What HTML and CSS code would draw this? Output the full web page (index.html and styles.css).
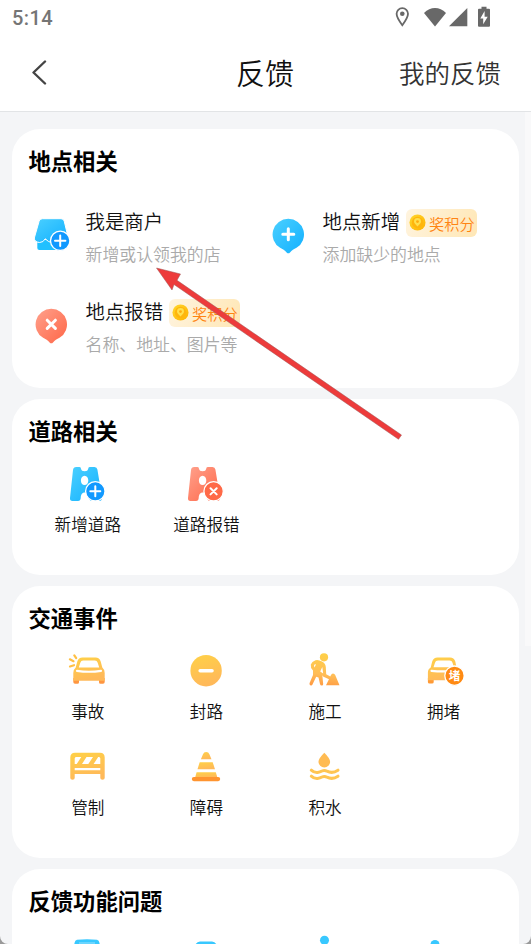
FILE: index.html
```html
<!DOCTYPE html>
<html lang="zh-CN">
<head>
<meta charset="utf-8">
<title>反馈</title>
<link rel="stylesheet" href="styles.css">
</head>
<body>
<svg class="defs" aria-hidden="true">
  <defs>
    <linearGradient id="blue" x1="0" y1="0" x2="1" y2="1"><stop offset="0" stop-color="#4bd0ff"/><stop offset="1" stop-color="#12b0ff"/></linearGradient>
    <linearGradient id="red" x1="0" y1="0" x2="1" y2="1"><stop offset="0" stop-color="#ffa18c"/><stop offset="1" stop-color="#ff6647"/></linearGradient>
    <linearGradient id="amber" x1="0" y1="0" x2="0.3" y2="1"><stop offset="0" stop-color="#ffd147"/><stop offset="1" stop-color="#ffb959"/></linearGradient>
    <linearGradient id="worker" gradientUnits="userSpaceOnUse" x1="20" y1="3" x2="16" y2="36"><stop offset="0" stop-color="#ffd147"/><stop offset=".65" stop-color="#ffbd57"/><stop offset="1" stop-color="#ff9a42"/></linearGradient>
    <linearGradient id="coin" x1="0" y1="0" x2="1" y2="1"><stop offset="0" stop-color="#ffd82e"/><stop offset="1" stop-color="#ffb000"/></linearGradient>
    <symbol id="coin-icon" viewBox="0 0 18 18"><circle cx="9" cy="9" r="8.5" fill="url(#coin)"/><circle cx="9" cy="9" r="6" fill="#ffb50c"/><path d="M9 13.2C6.800 11 5.300 9.700 5.300 7.900a3.700 3.700 0 0 1 7.400 0C12.700 9.700 11.200 11 9 13.200Z" fill="#ffe04d"/><circle cx="9" cy="8" r="1.500" fill="#ffab0d"/></symbol>
    <symbol id="pin" viewBox="0 0 40 40"><path d="M20.300 4.700a15.700 15.700 0 0 1 8.200 29.100c-2.600 1.400-4.800 2.500-6.500 4.600q-1.700 1.700-3.400 0c-1.700-2.100-4-3.200-6.500-4.600A15.700 15.700 0 0 1 20.300 4.700Z"/></symbol>
    <symbol id="road" viewBox="0 0 40 40"><path fill-rule="evenodd" d="M8.300 3H11.500Q13 3 13 4.700Q13.400 7.200 16.600 7.200T20.200 4.700Q20.200 3 21.700 3H26.500Q29 3 29.400 5.500L34 33.500Q34 37 31 37H24Q21.500 37 21.300 34C21 30 20 28.500 17 28.500C14.300 28.500 13 30 12.700 34Q12.500 37 10 37H4.500Q1.700 37 2 34L5 6Q5.300 3 8.300 3ZM16.600 11.800C14.200 11.800 12.900 14 12.900 16.500S14.200 21 16.600 21S20.300 19 20.300 16.500S19 11.800 16.600 11.800Z"/></symbol>
  </defs>
</svg>

<header class="header">
  <div class="status">
    <span class="time">5:14</span>
    <svg class="status-icons" viewBox="0 0 96 22" aria-hidden="true">
      <path d="M7.300 20.200C4 15.800 1.600 12.200 1.600 8.800a5.700 5.700 0 0 1 11.400 0C13 12.200 10.600 15.800 7.300 20.200Z" fill="none" stroke="#686868" stroke-width="1.800"/><circle cx="7.300" cy="8.800" r="2.300"/>
      <path d="M29 8.100Q34 3 40 3T51 8.100L40 21.500Z"/>
      <path d="M54 21.300L72.300 3V21.300Z"/>
      <path fill-rule="evenodd" d="M86.500 1.700h5v2H94q1 0 1 1v16q0 1-1 1H84q-1 0-1-1v-16q0-1 1-1h2.500ZM89.600 6l-4.300 7.500h2.900v5.800l4.500-7.500h-3.100Z"/>
    </svg>
  </div>
  <nav class="navbar">
    <svg class="back" viewBox="0 0 16 26" aria-hidden="true"><path d="M13 2.500L1.500 13.500L13 24.500"/></svg>
    <h1>反馈</h1>
    <a class="mine">我的反馈</a>
  </nav>
</header>

<main class="content">
  <section class="card places">
    <h2>地点相关</h2>
    <div class="place-grid">
      <div class="place">
        <svg class="icon" viewBox="0 0 40 40"><path fill="#20c0ff" d="M6.300 26H30V36H8.300Q6.300 36 6.300 34Z"/><path fill="url(#blue)" stroke="#fff" stroke-width="1" d="M11.500 4.700H30Q32.500 4.700 33.200 7L37 23Q37 28 31 28.500H20Q17.500 28 14.200 24.800Q12.500 28.500 8.500 28.500Q3.300 28 3.300 24L8 7.500Q8.500 4.700 11.500 4.700Z"/><circle cx="29.200" cy="26.800" r="9.700" fill="#1199ff" stroke="#fff" stroke-width="1.300"/><path class="mark thin" d="M24 26.800H34.400M29.200 21.600V32"/></svg>
        <div class="place-text"><div class="name">我是商户</div><div class="desc">新增或认领我的店</div></div>
      </div>
      <div class="place">
        <svg class="icon" viewBox="0 0 40 40"><use href="#pin" fill="url(#blue)"/><path class="mark" d="M14.800 20.300H25.800M20.300 14.800V25.800"/></svg>
        <div class="place-text"><div class="name">地点新增<span class="reward"><svg viewBox="0 0 18 18"><use href="#coin-icon"/></svg>奖积分</span></div><div class="desc">添加缺少的地点</div></div>
      </div>
      <div class="place">
        <svg class="icon" viewBox="0 0 40 40"><use href="#pin" fill="url(#red)"/><path class="mark" d="M16.200 16.200L24.400 24.400M24.400 16.200L16.200 24.400"/></svg>
        <div class="place-text"><div class="name">地点报错<span class="reward"><svg viewBox="0 0 18 18"><use href="#coin-icon"/></svg>奖积分</span></div><div class="desc">名称、地址、图片等</div></div>
      </div>
    </div>
  </section>

  <section class="card roads">
    <h2>道路相关</h2>
    <div class="tiles">
      <div class="tile"><svg class="icon" viewBox="0 0 40 40"><use href="#road" fill="url(#blue)"/><circle cx="27.300" cy="27.300" r="9.700" fill="#1199ff" stroke="#fff" stroke-width="1.300"/><path class="mark thin" d="M22.300 27.300H32.300M27.300 22.300V32.300"/></svg><span>新增道路</span></div>
      <div class="tile"><svg class="icon" viewBox="0 0 40 40"><use href="#road" fill="url(#red)"/><circle cx="27.600" cy="27.300" r="9.700" fill="#ff6947" stroke="#fff" stroke-width="1.300"/><path class="mark thin" d="M24.500 24.200L30.700 30.400M30.700 24.200L24.500 30.400"/></svg><span>道路报错</span></div>
    </div>
  </section>

  <section class="card events">
    <h2>交通事件</h2>
    <div class="tiles">
      <div class="tile"><svg class="icon" viewBox="0 0 40 40"><path d="M5.300 28H11V32.200Q11 33.700 9.500 33.700H7Q5.300 33.700 5.300 32ZM31 28H36.700V32Q36.700 33.700 35 33.700H32.500Q31 33.700 31 32.200Z" fill="#ff9640"/><path fill="url(#amber)" fill-rule="evenodd" d="M14.500 7.500H27.500Q31.500 7.500 32.700 11.500L34.300 17.500Q36.700 19.500 36.700 23V30.700H5.300V23Q5.300 19.500 7.700 17.500L9.300 11.500Q10.500 7.500 14.500 7.500ZM15.200 10.500Q13 10.500 12.300 12.800L10.800 17.500H31.200L29.700 12.800Q29 10.500 26.800 10.500Z"/><path d="M9 20.900Q21 22.600 33 20.900" class="mark cut"/><path d="M6.300 5.300L8.200 8.200M1.900 9.300L5.500 11.200M2 16.500L6 15.200" class="ray"/></svg><span>事故</span></div>
      <div class="tile"><svg class="icon" viewBox="0 0 40 40"><circle cx="20.100" cy="20.700" r="15.700" fill="url(#amber)"/><path class="mark minus" d="M14.200 20.700H26"/></svg><span>封路</span></div>
      <div class="tile"><svg class="icon" viewBox="0 0 40 40"><g fill="url(#worker)"><circle cx="19" cy="7.300" r="4.100"/><path d="M10.500 10.300Q13 9.200 17 11.600Q20.500 13.500 20.800 17L21.200 24.200L26.300 27L30 30.500L28.500 31.300L18.500 26.700Q17.500 26.200 17.300 25L18.200 34Q18.200 35.500 16.800 35.500Q15.300 35.500 15 34L13.500 27.600L11.200 26.800L7.500 34.500Q6.800 35.800 5.300 35.200Q4 34.500 4.600 33L8 25V20.500Q5.200 17.500 5.800 14.500Q6.800 11.500 10.500 10.300ZM9.500 14.500Q8.500 15.300 9.500 17.600L11 14.200ZM17.300 17L15.200 21.500L18.200 23.500Z" fill-rule="evenodd"/><path d="M21 35.300L26 25Q26.700 23.500 28 23.500Q29.500 23.500 30.200 25L34.500 35.300Z"/></g></svg><span>施工</span></div>
      <div class="tile"><svg class="icon" viewBox="0 0 40 40"><path d="M3.900 28H9.700V32Q9.700 33.500 8 33.500H5.500Q3.900 33.500 3.900 32Z" fill="#ff9a35"/><path fill="url(#amber)" fill-rule="evenodd" d="M13.500 7.500H26Q30 7.500 31.300 11.500L32.500 17.500Q35.200 19.500 35.200 23V30.300H3.900V22.500Q3.900 19 6.700 17.500L8.200 11.500Q9.500 7.500 13.500 7.500ZM14 10.500Q11.500 10.500 11 12.700L9.500 17.300H30L28.500 12.700Q28 10.500 25.500 10.500Z"/><path d="M7.500 20.800Q19 22 30 20.800" class="mark cut"/><circle cx="30.500" cy="25.700" r="9.700" fill="#ff8a13" stroke="#fff" stroke-width="1.300"/><text x="30.500" y="30" class="jam">堵</text></svg><span>拥堵</span></div>
      <div class="tile"><svg class="icon" viewBox="0 0 40 40"><path fill="url(#amber)" fill-rule="evenodd" d="M7 6.700H32Q36.700 6.700 36.700 11.400V32Q36.700 33.700 34.500 33.700T32.300 32V28H6.700V32Q6.700 33.700 4.500 33.700T2.300 32V11.400Q2.300 6.700 7 6.700ZM6.700 22V24.200H32.300V22ZM8 11Q6.700 11 6.700 12.500V18H8.700L13.300 11ZM18.500 11L14 18H20.300L25 11ZM30.200 11L25.600 18H32.300V12.500Q32.300 11 31 11Z"/></svg><span>管制</span></div>
      <div class="tile"><svg class="icon" viewBox="0 0 40 40"><g fill="url(#amber)"><path d="M17 8.200Q17.800 6 20.200 6T23.400 8.200L25.500 13.300H14.900Z"/><path d="M13.700 16.300H26.700L29 23.200H11.500Z" /><path d="M10.600 26.200H29.800L31.500 32H9Z"/></g><rect x="5.800" y="31" width="28.400" height="4.200" rx="2.100" fill="#ff942f"/></svg><span>障碍</span></div>
      <div class="tile"><svg class="icon" viewBox="0 0 40 40"><path fill="#ffbb52" d="M19.300 6.700Q25.100 12.400 25.100 15.700A5.800 5.800 0 0 1 13.500 15.700Q13.500 12.400 19.300 6.700Z"/><path class="wave" d="M6.300 24.200Q9 26.800 12.500 26.500Q15 26.200 17 25Q19.500 23.800 22 25.200Q27.500 28 33 24.200M6.300 30.200Q9 32.800 12.500 32.500Q15 32.200 17 31Q19.500 29.800 22 31.200Q27.500 34 33 30.200"/></svg><span>积水</span></div>
    </div>
  </section>

  <section class="card issues">
    <h2>反馈功能问题</h2>
    <div class="tiles">
      <div class="tile"><svg class="icon" viewBox="0 0 40 40"><path fill="#38c8ff" d="M9 6.800Q19 5.600 29 6.800Q31 7 31.500 10L34 30H4L6.500 10Q7 7 9 6.800Z"/><path d="M11 10H27" stroke="#7adaff" stroke-width="1.500"/></svg></div>
      <div class="tile"><svg class="icon" viewBox="0 0 40 40"><path fill="#38c8ff" d="M14 8.600H26Q31 9 32 16V34H8V16Q9 9 14 8.600Z"/></svg></div>
      <div class="tile"><svg class="icon" viewBox="0 0 40 40"><circle cx="19.500" cy="7.300" r="4.500" fill="#38c8ff"/></svg></div>
      <div class="tile"><svg class="icon" viewBox="0 0 40 40"><circle cx="11" cy="11.500" r="4.500" fill="#38c8ff"/></svg></div>
    </div>
  </section>
</main>
<div class="scroll-thumb"></div>
<svg class="arrow" viewBox="0 0 260 180" aria-hidden="true"><path d="M5.500 5L29.500 11L26 17.300L250.500 172L247.500 176.300L23 21.500L21 27Z"/></svg>
</body>
</html>
```
FILE: styles.css
```css
* { box-sizing: border-box; }
html { background: #9a9a9a; }
body {
  margin: 0;
  width: 531px;
  height: 944px;
  overflow: hidden;
  position: relative;
  border-radius: 0 0 8px 8px;
  background: #f4f5f7;
  color: #111;
  font-family: "Noto Sans CJK SC", sans-serif;
  font-weight: 350;
}
h1, h2 { margin: 0; }
.defs { position: absolute; width: 0; height: 0; }

.header {
  height: 112px;
  background: #fff;
  border-bottom: 1px solid #e2e4e6;
}
.status {
  height: 36px;
  padding: 0 40px 0 12px;
  display: flex;
  align-items: center;
  justify-content: space-between;
}
.time {
  font: 500 20px/36px Roboto, sans-serif;
  letter-spacing: .4px;
  color: #757575;
}
.status-icons { width: 96px; height: 22px; fill: #686868; margin-bottom: 4px; }
.navbar {
  height: 72px;
  padding: 0 30px 0 32px;
  display: grid;
  grid-template-columns: 1fr 59px 1fr;
  align-items: center;
}
.back {
  width: 16px;
  height: 26px;
  fill: none;
  stroke: #444;
  stroke-width: 2.4;
  stroke-linecap: round;
  stroke-linejoin: round;
}
h1 { font-size: 29px; line-height: 40px; font-weight: 350; margin-left: -1px; }
.mine { justify-self: end; font-size: 25.5px; line-height: 40px; color: #333; }

.content {
  height: 832px;
  overflow: hidden;
  padding: 17px 12px 0;
  display: flex;
  flex-direction: column;
  gap: 11px;
}
.card {
  background: #fff;
  border-radius: 28px;
  padding: 16px 16.5px 0;
  flex: none;
}
.card h2 { font-size: 22.3px; line-height: 30px; font-weight: 700; color: #000; }
.places { height: 259px; }
.roads { height: 176px; }
.events { height: 272px; }
.issues { height: 75px; overflow: hidden; border-radius: 28px 28px 0 0; }

.place-grid {
  display: grid;
  grid-template-columns: 237px 237px;
  grid-auto-rows: 90px;
  padding-top: 31px;
}
.place { display: flex; gap: 14.5px; padding-left: 2.5px; }
.place .icon { margin-top: 8px; }
.icon { width: 40px; height: 40px; flex: none; display: block; }
.place-text { white-space: nowrap; }
.name {
  display: flex;
  align-items: center;
  gap: 6px;
  height: 30px;
  font-size: 19.4px;
  line-height: 30px;
}
.desc { margin-top: 6px; font-size: 16.9px; line-height: 24px; color: #aaa; }
.reward {
  display: flex;
  align-items: center;
  gap: 3px;
  width: 71px;
  height: 28px;
  margin-top: 3px;
  padding-left: 3px;
  border-radius: 6px;
  background: linear-gradient(115deg, #fff4df, #ffe7b5);
  color: #ff8412;
  font-size: 15.2px;
  line-height: 28px;
}
.reward svg { width: 17px; height: 17px; }

.tiles {
  display: grid;
  grid-template-columns: repeat(4, 118.6px);
  grid-auto-rows: 96px;
  padding-top: 18px;
}
.tile {
  display: flex;
  flex-direction: column;
  align-items: center;
  gap: 9px;
  font-size: 16.6px;
  line-height: 24px;
}
.roads .tiles { padding-top: 19px; }
.roads .tile { gap: 8px; }

.mark { fill: none; stroke: #fff; stroke-width: 3; stroke-linecap: round; }
.mark.thin { stroke-width: 2; }
.mark.cut { stroke-width: 2.2; }
.mark.minus { stroke-width: 3.6; }
.ray { fill: none; stroke: #ffc044; stroke-width: 2.2; stroke-linecap: round; }
.wave { fill: none; stroke: #ffc552; stroke-width: 3; stroke-linecap: round; }
.jam { font-size: 11.5px; font-weight: 700; fill: #fff; text-anchor: middle; }

.scroll-thumb {
  position: absolute;
  right: 0;
  top: 112px;
  width: 6px;
  height: 534px;
  background: #f9f9fa;
}
.arrow {
  position: absolute;
  left: 151px;
  top: 263px;
  width: 260px;
  height: 180px;
  fill: #ed3b3b;
  stroke: #9c5555;
  stroke-width: .5;
}
```
